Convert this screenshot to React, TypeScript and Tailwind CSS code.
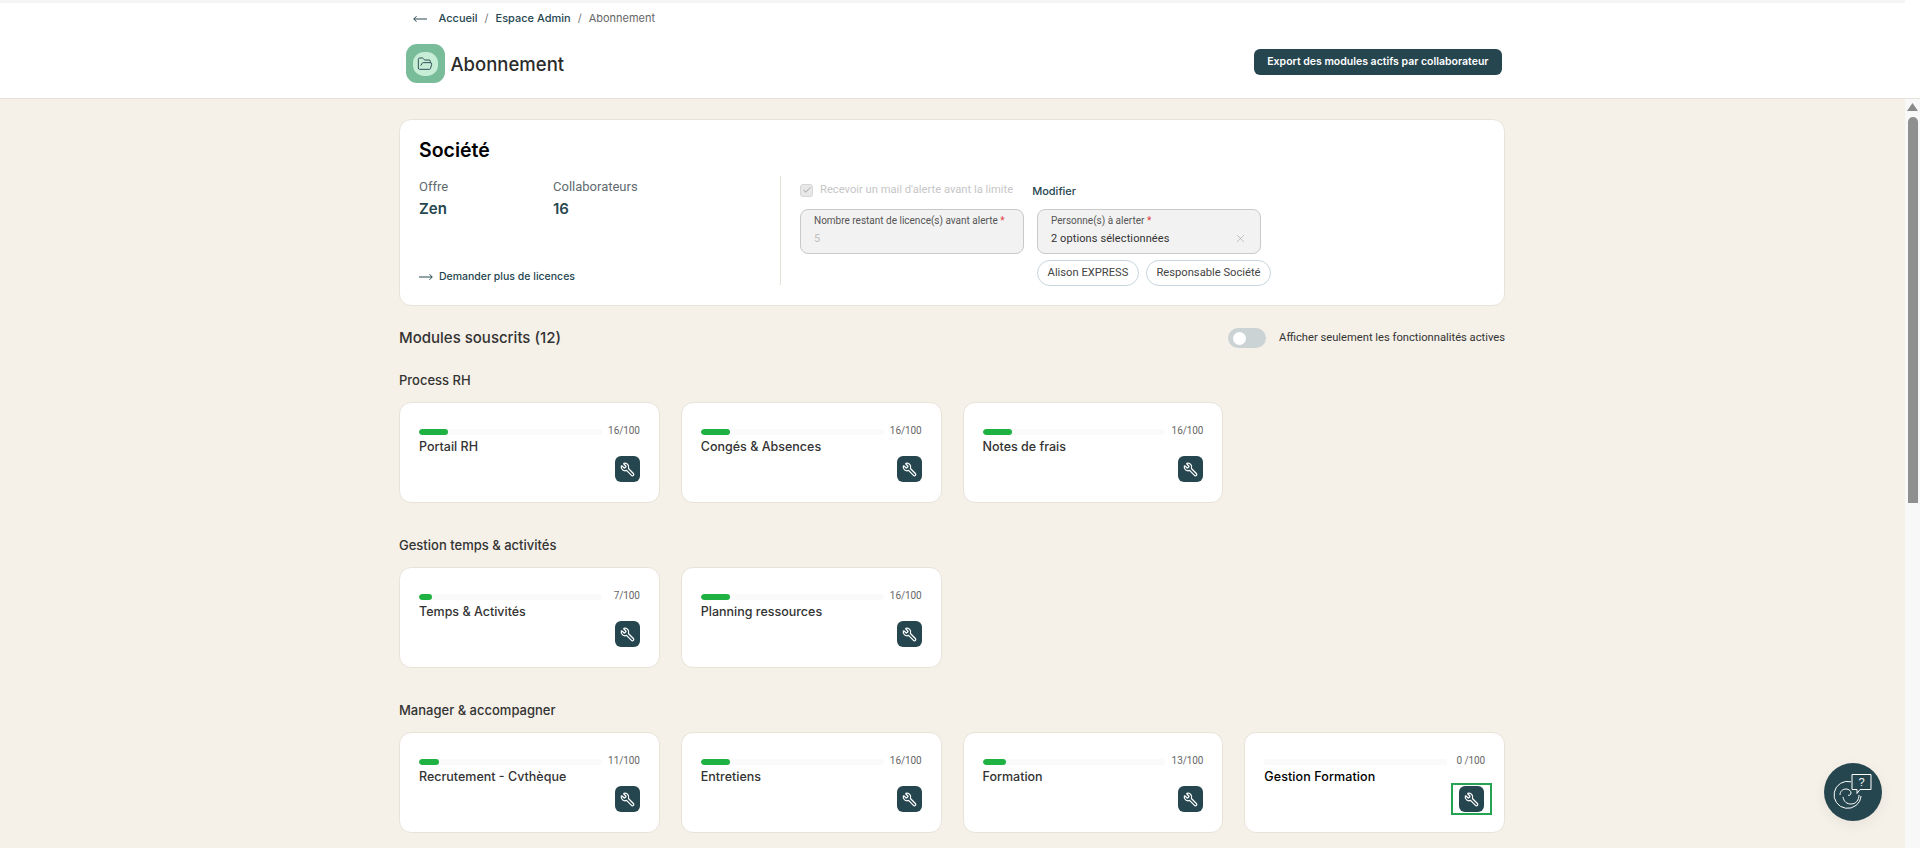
import { Check, FolderOpen, Wrench, X } from "lucide-react";

const fig = "font-['Inter','Noto_Sans',sans-serif]";
const rob = "font-['Roboto','Noto_Sans',sans-serif]";

function ArrowLine({ left }: { left?: boolean }) {
  return (
    <svg width="14" height="8" viewBox="0 0 14 8" fill="none" stroke="#26464f" strokeWidth="1">
      {left ? <path d="M14 4H0.8M3.5 1.2 0.8 4l2.7 2.8" /> : <path d="M0 4h13.2M10.5 1.2 13.2 4l-2.7 2.8" />}
    </svg>
  );
}

function ToolButton({ outlined }: { outlined?: boolean }) {
  const btn = (
    <div className="flex h-[26px] w-[25px] items-center justify-center rounded-[6px] bg-[#26464f] text-white">
      <Wrench size={15} strokeWidth={2} className="-scale-x-100" />
    </div>
  );
  if (outlined) {
    return <div className="-mx-[7px] -my-[3px] flex h-[32px] w-[41px] items-center justify-center border-2 border-[#26a352]">{btn}</div>;
  }
  return btn;
}

type Mod = { name: string; n: number; special?: boolean };

function ModuleCard({ name, n, special }: Mod) {
  return (
    <div className="flex h-[101px] flex-col rounded-[12px] border border-[#e8e3d9] bg-white pr-[19px] pl-[19px] pt-[23px]">
      <div className="flex items-center gap-[8px]">
        <div className="h-[6px] flex-1 overflow-hidden rounded-full bg-[#fafafa]">
          <div className="h-full rounded-full bg-[#1fb141]" style={{ width: `${n}%` }} />
        </div>
        <span className={`${rob} -mt-[1px] flex w-[30px] justify-end text-[10px] leading-[12px] tracking-[-0.1px] whitespace-nowrap text-[#666]`}>
          {special ? "0 /100" : `${n}/100`}
        </span>
      </div>
      <div className={`${fig} text-[12.5px] leading-[20px] font-medium ${special ? "tracking-[0.1px] text-black" : "text-[#333]"}`}>{name}</div>
      <div className="-mt-[1px] flex justify-end">
        <ToolButton outlined={special} />
      </div>
    </div>
  );
}

function Section({ title, mods }: { title: string; mods: Mod[] }) {
  return (
    <section className="mb-[32px]">
      <h3 className={`${fig} mb-[11px] h-[21px] text-[13px] leading-[21px] font-medium text-[#333]`}>{title}</h3>
      <div className="grid grid-cols-4 gap-x-[21px]">
        {mods.map((m) => (
          <ModuleCard key={m.name} {...m} />
        ))}
      </div>
    </section>
  );
}

export default function App() {
  return (
    <div className="relative flex h-[848px] w-[1920px] flex-col overflow-hidden bg-[#f5f0e8]">
      <header className="h-[99px] shrink-0 border-b border-[#e6e1d7] bg-white pr-[15px]">
        <div className="h-[3px] bg-[#f4f4f4]" />
        <div className="mx-auto w-[1106px] pr-[4px] pl-[6px]">
          <nav className={`${fig} flex h-[31px] items-center pl-[7px] text-[11px] font-medium text-[#26464f]`}>
            <ArrowLine left />
            <span className="ml-[12px]">Accueil</span>
            <span className="mx-[7px] font-normal text-[#777]">/</span>
            <span>Espace Admin</span>
            <span className="mx-[7px] font-normal text-[#777]">/</span>
            <span className="font-normal text-[#666]">Abonnement</span>
          </nav>
          <div className="mt-[10px] flex items-center justify-between">
            <div className="flex items-center gap-[6px]">
              <div className="flex h-[39px] w-[39px] items-center justify-center rounded-[11px] bg-[#79bc9a]">
                <div className="flex h-[24px] w-[25px] items-center justify-center rounded-[45%] bg-[#c6edd5]">
                  <FolderOpen size={16} strokeWidth={1.4} className="text-[#26464f]" />
                </div>
              </div>
              <h1 className={`${fig} text-[18.5px] leading-[24px] font-medium text-[#2b2b2b]`}>Abonnement</h1>
            </div>
            <button className={`${fig} -mt-[3px] h-[26px] rounded-[6px] bg-[#26464f] px-[13px] text-[10.5px] font-semibold text-white`}>
              Export des modules actifs par collaborateur
            </button>
          </div>
        </div>
      </header>

      <div className="flex min-h-0 flex-1">
        <main className="min-w-0 flex-1 overflow-hidden pr-[1px]">
          <div className="mx-auto w-[1106px] pt-[20px]">
            <div className="flex h-[187px] rounded-[12px] border border-[#e8e3d9] bg-white pt-[18px] pl-[19px]">
              <div className="flex w-[361px] flex-col">
                <h2 className={`${fig} text-[19.5px] leading-[24px] font-semibold text-black`}>Société</h2>
                <div className="mt-[16px] flex">
                  <div className="w-[134px]">
                    <div className={`${rob} text-[13px] leading-[18px] text-[#5f6b70]`}>Offre</div>
                    <div className={`${fig} mt-[3px] text-[15px] leading-[20px] font-semibold text-[#26464f]`}>Zen</div>
                  </div>
                  <div>
                    <div className={`${rob} text-[13px] leading-[18px] text-[#5f6b70]`}>Collaborateurs</div>
                    <div className={`${fig} mt-[3px] text-[15px] leading-[20px] font-semibold text-[#26464f]`}>16</div>
                  </div>
                </div>
                <div className={`${fig} mt-[50px] flex items-center gap-[6px] text-[10.5px] font-medium text-[#26464f]`}>
                  <ArrowLine />
                  <span>Demander plus de licences</span>
                </div>
              </div>
              <div className="mt-[38px] h-[109px] w-px bg-[#e6e1d7]" />
              <div className="ml-[19px] w-[480px] pt-[43px]">
                <div className="flex h-[18px] items-center">
                  <span className="flex h-[13px] w-[13px] items-center justify-center rounded-[3px] border border-[#d5d5d5] bg-[#e8e8e8] text-[#b5b5b5]">
                    <Check size={10} strokeWidth={2.5} />
                  </span>
                  <span className={`${rob} ml-[7px] text-[11.2px] text-[#c6c6c6]`}>Recevoir un mail d'alerte avant la limite</span>
                  <span className={`${fig} ml-[19px] pt-[2px] text-[11px] font-medium text-[#26464f]`}>Modifier</span>
                </div>
                <div className="mt-[10px] flex gap-[13px]">
                  <div className={`${rob} h-[45px] w-[224px] rounded-[8px] border border-[#c9c9c9] bg-[#f2f2f2] pt-[4px] pl-[13px]`}>
                    <div className="text-[10px] leading-[14px] text-[#555]">
                      Nombre restant de licence(s) avant alerte <span className="text-[#e0393e]">*</span>
                    </div>
                    <div className="mt-[3px] text-[11px] leading-[16px] text-[#c0c0c0]">5</div>
                  </div>
                  <div>
                    <div className={`${rob} relative h-[45px] w-[224px] rounded-[8px] border border-[#c9c9c9] bg-[#f2f2f2] pt-[4px] pl-[13px]`}>
                      <div className="text-[10px] leading-[14px] text-[#555]">
                        Personne(s) à alerter <span className="text-[#e0393e]">*</span>
                      </div>
                      <div className="mt-[3px] text-[11px] leading-[16px] tracking-[0.1px] text-[#333]">2 options sélectionnées</div>
                      <X size={13} strokeWidth={1} className="absolute top-[22px] right-[13px] text-[#999]" />
                    </div>
                    <div className={`${rob} mt-[6px] flex gap-[7px] text-[11.2px] whitespace-nowrap text-[#444]`}>
                      <span className="flex h-[26px] w-[102px] items-center justify-center rounded-full border border-[#c7d6de]">Alison EXPRESS</span>
                      <span className="flex h-[26px] w-[125px] shrink-0 items-center justify-center rounded-full border border-[#c7d6de]">Responsable Société</span>
                    </div>
                  </div>
                </div>
              </div>
            </div>

            <div className="mt-[21px] mb-[21px] flex h-[22px] items-center justify-between">
              <h2 className={`${fig} text-[15px] font-medium text-[#333]`}>Modules souscrits (12)</h2>
              <div className="flex items-center gap-[13px]">
                <div className="flex h-[20px] w-[38px] items-center rounded-full bg-[#cbd3d5] pl-[5px]">
                  <div className="h-[13px] w-[13px] rounded-full bg-white" />
                </div>
                <span className={`${rob} text-[11.2px] text-[#333]`}>Afficher seulement les fonctionnalités actives</span>
              </div>
            </div>

            <Section
              title="Process RH"
              mods={[
                { name: "Portail RH", n: 16 },
                { name: "Congés & Absences", n: 16 },
                { name: "Notes de frais", n: 16 },
              ]}
            />
            <Section
              title="Gestion temps & activités"
              mods={[
                { name: "Temps & Activités", n: 7 },
                { name: "Planning ressources", n: 16 },
              ]}
            />
            <Section
              title="Manager & accompagner"
              mods={[
                { name: "Recrutement - Cvthèque", n: 11 },
                { name: "Entretiens", n: 16 },
                { name: "Formation", n: 13 },
                { name: "Gestion Formation", n: 0, special: true },
              ]}
            />
          </div>
        </main>
        <div className="flex w-[15px] shrink-0 flex-col items-center bg-[#f8f8f8]">
          <svg width="11" height="8" viewBox="0 0 11 8" className="mt-[4px] mb-[6px] shrink-0">
            <path d="M5.5 0 11 8H0z" fill="#8a8a8a" />
          </svg>
          <div className="h-[386px] w-[10px] rounded-t-[5px] bg-[#8f8f8f]" />
        </div>
      </div>

      <div className="absolute top-[763px] left-[1824px] h-[58px] w-[58px] rounded-full bg-[#26464f] shadow-[0_4px_14px_rgba(0,0,0,0.06)]">
        <svg width="58" height="58" viewBox="0 0 58 58" fill="none" stroke="#fff" strokeWidth="1">
          <path d="M27 18.8a13.5 13.5 0 1 0 10 14.2" />
          <path d="M16 32c0-4 3-6 6-6 3 0 5 2 5 4s-2 3-3 2M19 34c1 5 4 7 8 7 5 0 8-4 8-9" />
          <path d="M28 11.5h19v15H36l-3 4v-4h-5z" fill="#26464f" />
          <text x="37.5" y="23" fontFamily="Liberation Sans, sans-serif" fontSize="11" fill="#fff" stroke="none" textAnchor="middle">?</text>
        </svg>
      </div>
    </div>
  );
}
